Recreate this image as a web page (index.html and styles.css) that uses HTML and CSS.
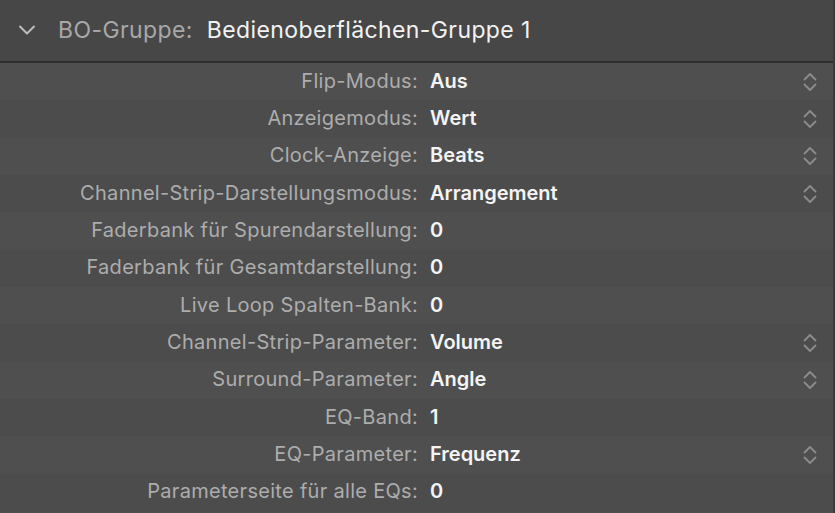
FILE: index.html
```html
<!DOCTYPE html>
<html lang="de">
<head>
<meta charset="utf-8">
<link rel="stylesheet" href="styles.css">
</head>
<body>
<div class="panel">
  <div class="header">
    <svg class="disclosure" width="18" height="12" viewBox="0 0 18 12"><path d="M2 2.5 L9 9.5 L16 2.5" fill="none" stroke="#bdbdbd" stroke-width="2" stroke-linecap="round" stroke-linejoin="round"/></svg>
    <span class="h-label">BO-Gruppe:</span>
    <span class="h-value">Bedienoberflächen-Gruppe 1</span>
  </div>
  <div class="rows">
    <div class="row"><span class="label">Flip-Modus:</span><span class="value">Aus</span><svg class="stepper" viewBox="0 0 14 20"><path d="M1.5 7.5 L7 2 L12.5 7.5 M1.5 12.5 L7 18 L12.5 12.5" fill="none" stroke="#8c8c8c" stroke-width="1.8" stroke-linecap="round" stroke-linejoin="round"/></svg></div>
    <div class="row"><span class="label">Anzeigemodus:</span><span class="value">Wert</span><svg class="stepper" viewBox="0 0 14 20"><path d="M1.5 7.5 L7 2 L12.5 7.5 M1.5 12.5 L7 18 L12.5 12.5" fill="none" stroke="#8c8c8c" stroke-width="1.8" stroke-linecap="round" stroke-linejoin="round"/></svg></div>
    <div class="row"><span class="label">Clock-Anzeige:</span><span class="value">Beats</span><svg class="stepper" viewBox="0 0 14 20"><path d="M1.5 7.5 L7 2 L12.5 7.5 M1.5 12.5 L7 18 L12.5 12.5" fill="none" stroke="#8c8c8c" stroke-width="1.8" stroke-linecap="round" stroke-linejoin="round"/></svg></div>
    <div class="row"><span class="label">Channel-Strip-Darstellungsmodus:</span><span class="value">Arrangement</span><svg class="stepper" viewBox="0 0 14 20"><path d="M1.5 7.5 L7 2 L12.5 7.5 M1.5 12.5 L7 18 L12.5 12.5" fill="none" stroke="#8c8c8c" stroke-width="1.8" stroke-linecap="round" stroke-linejoin="round"/></svg></div>
    <div class="row"><span class="label">Faderbank für Spurendarstellung:</span><span class="value">0</span></div>
    <div class="row"><span class="label">Faderbank für Gesamtdarstellung:</span><span class="value">0</span></div>
    <div class="row"><span class="label">Live Loop Spalten-Bank:</span><span class="value">0</span></div>
    <div class="row"><span class="label">Channel-Strip-Parameter:</span><span class="value">Volume</span><svg class="stepper" viewBox="0 0 14 20"><path d="M1.5 7.5 L7 2 L12.5 7.5 M1.5 12.5 L7 18 L12.5 12.5" fill="none" stroke="#8c8c8c" stroke-width="1.8" stroke-linecap="round" stroke-linejoin="round"/></svg></div>
    <div class="row"><span class="label">Surround-Parameter:</span><span class="value">Angle</span><svg class="stepper" viewBox="0 0 14 20"><path d="M1.5 7.5 L7 2 L12.5 7.5 M1.5 12.5 L7 18 L12.5 12.5" fill="none" stroke="#8c8c8c" stroke-width="1.8" stroke-linecap="round" stroke-linejoin="round"/></svg></div>
    <div class="row"><span class="label">EQ-Band:</span><span class="value">1</span></div>
    <div class="row"><span class="label">EQ-Parameter:</span><span class="value">Frequenz</span><svg class="stepper" viewBox="0 0 14 20"><path d="M1.5 7.5 L7 2 L12.5 7.5 M1.5 12.5 L7 18 L12.5 12.5" fill="none" stroke="#8c8c8c" stroke-width="1.8" stroke-linecap="round" stroke-linejoin="round"/></svg></div>
    <div class="row"><span class="label">Parameterseite für alle EQs:</span><span class="value">0</span></div>
  </div>
</div>
</body>
</html>
```

FILE: styles.css
```css
html, body {
  margin: 0;
  padding: 0;
  background: #4d4d4d;
}
body {
  font-family: Inter, "Noto Sans", "Liberation Sans", sans-serif;
  width: 835px;
  height: 513px;
  overflow: hidden;
}
.panel {
  display: flex;
  flex-direction: column;
  height: 513px;
  border-right: 2px solid #3a3a3a;
  box-sizing: border-box;
}
.header {
  height: 63px;
  flex: none;
  background: #474747;
  border-bottom: 2px solid #2e2e2e;
  display: flex;
  align-items: center;
  padding-left: 18px;
  box-sizing: border-box;
  font-size: 23px;
  letter-spacing: 0.4px;
  padding-bottom: 2px;
}
.disclosure {
  width: 18px;
  height: 12px;
  margin-right: 22px;
  margin-top: 1px;
}
.h-label {
  color: #a8a8a8;
  margin-right: 14px;
}
.h-value {
  color: #f2f2f2;
}
.rows {
  display: flex;
  flex-direction: column;
}
.row {
  height: 37.33px;
  flex: none;
  display: flex;
  align-items: center;
  font-size: 20px;
  letter-spacing: 0.3px;
  background: #4f4f4f;
  box-sizing: border-box;
  padding-bottom: 2px;
}
.row:nth-child(even) {
  background: #4c4c4c;
}
.label {
  width: 418px;
  text-align: right;
  color: #adadad;
  flex: none;
}
.value {
  margin-left: 12px;
  color: #f4f4f4;
  font-weight: 600;
  letter-spacing: 0;
  flex: 1;
}
.stepper {
  width: 14px;
  height: 20px;
  margin-right: 16px;
  margin-top: 2px;
  flex: none;
}
```
